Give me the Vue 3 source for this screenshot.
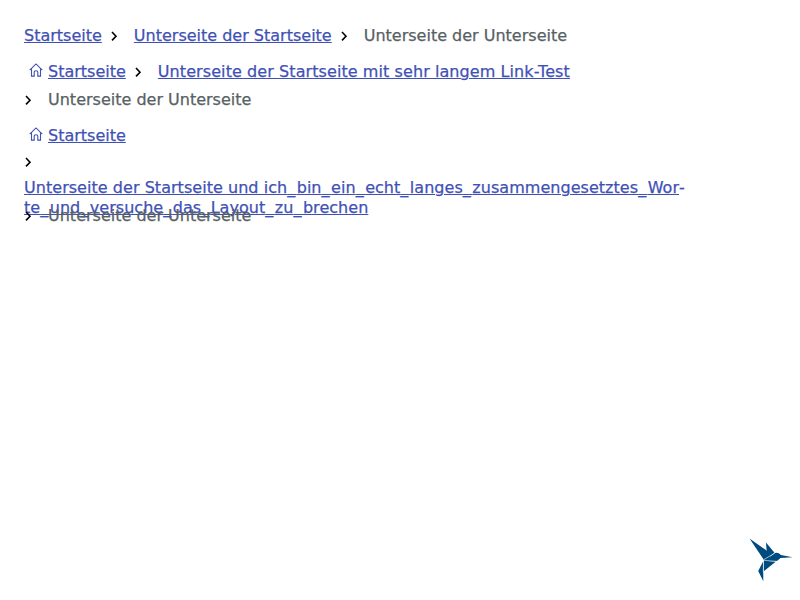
<script setup>
const trails = [
  {
    home: false,
    items: [
      { lines: ['Startseite'], link: true },
      { lines: ['Unterseite der Startseite'], link: true },
      { lines: ['Unterseite der Unterseite'] },
    ],
  },
  {
    home: true,
    items: [
      { lines: ['Startseite'], link: true },
      { lines: ['Unterseite der Startseite mit sehr langem Link-Test'], link: true, wide: true },
      { lines: ['Unterseite der Unterseite'] },
    ],
  },
  {
    home: true,
    items: [
      { lines: ['Startseite'], link: true },
      {
        lines: [
          'Unterseite der Startseite und ich_bin_ein_echt_langes_zusammengesetztes_Wor',
          'te_und_versuche_das_Layout_zu_brechen',
        ],
        link: true,
        long: true,
      },
      { lines: ['Unterseite der Unterseite'] },
    ],
  },
]

// Separates underscores from words so they can be tracked individually.
const parts = (line) => line.split(/(_)/)
</script>

<template>
  <main class="page">
    <nav v-for="(trail, t) in trails" :key="t">
      <ol class="trail">
        <li v-for="(item, i) in trail.items" :key="i" class="item" :class="{ long: item.long, wide: item.wide }">
          <span v-if="i > 0" class="separator">
            <svg width="8" height="12" viewBox="0 0 8 12"><path d="M2 2 6 6.2 2 10.4" /></svg>
          </span>
          <svg v-if="i === 0 && trail.home" class="home" width="14" height="14" viewBox="0 0 14 14">
            <path d="M.7 7.1 7 .9l6.3 6.2M2.5 5.6v7.5h2.7V9.3q0-1.6 1.8-1.6t1.8 1.6v3.8h2.7V5.6" />
          </svg>
          <a v-if="item.link" class="label link" href="#"><span v-for="line in item.lines" :key="line" class="line"><span v-for="(part, p) in parts(line)" :key="p" :class="{ underscore: part === '_' }">{{ part }}</span></span></a>
          <span v-else class="label current">{{ item.lines[0] }}</span>
        </li>
      </ol>
    </nav>
    <svg class="logo" width="44" height="44" viewBox="0 0 44 44">
      <path class="bird" d="M.5.5 19 13.6 22 20.5 14.3 21.1ZM17 4.5 25.5 14.8 20.5 18.7 17.5 11.5ZM20.7 19 26 15Q29 13.8 32 17L43.5 19.2 31.5 20 28 23 15 22ZM14.8 22.8 27 23.5 14.8 33.2ZM14.2 23.2 14.3 43.2 9.2 33Z" />
      <path class="bird" d="M14.3 21.1 22 20.5 28 23 15 23Z" />
      <path class="seam" d="M14.5 22.3 28 23.4M14.4 22v12M25.5 15.2 14.3 22" />
    </svg>
  </main>
</template>

<style>
body {
  margin: 0;
  background: #fff;
}
</style>

<style scoped>
.page {
  box-sizing: border-box;
  width: 800px;
  height: 600px;
  padding: 21px 24px;
  display: flex;
  flex-direction: column;
  gap: 8px;
  font: 16px/20px Verdana, "DejaVu Sans", sans-serif;
}
.trail {
  display: flex;
  flex-wrap: wrap;
  margin: 0;
  padding: 0;
  list-style: none;
}
.item {
  display: flex;
  align-items: center;
  height: 28px;
  margin-right: 8px;
}
.separator {
  display: flex;
  align-items: center;
  width: 24px;
  height: 28px;
  padding-top: 2px;
  box-sizing: border-box;
}
.separator svg {
  fill: none;
  stroke: #000;
  stroke-width: 1.6;
}
.label {
  padding-top: 2px;
  white-space: nowrap;
  -webkit-text-stroke: 0.25px currentColor;
}
.link {
  color: #3f51b5;
  text-decoration: underline;
  text-decoration-thickness: 1px;
  text-underline-offset: 1px;
}
.line {
  display: block;
}
.wide .link {
  letter-spacing: 0.08px;
}
.current {
  color: #576164;
}
.home {
  margin: 0 5px 3px;
  fill: none;
  stroke: #3f51b5;
  stroke-width: 1.1;
}
.long {
  display: block;
  width: 100%;
  height: 52px;
  margin-right: 0;
}
.long .separator {
  padding: 0 0 2px;
}
.long .link {
  display: block;
  padding-top: 1px;
  letter-spacing: 0.04px;
}
.long .underscore {
  letter-spacing: 1.5px;
}
.long .line:first-child::after {
  content: "-";
  display: inline-block;
}
.logo {
  position: absolute;
  left: 749px;
  top: 538px;
}
.bird {
  fill: #004a7f;
}
.seam {
  fill: none;
  stroke: #fff;
  stroke-width: 0.6;
}
</style>
